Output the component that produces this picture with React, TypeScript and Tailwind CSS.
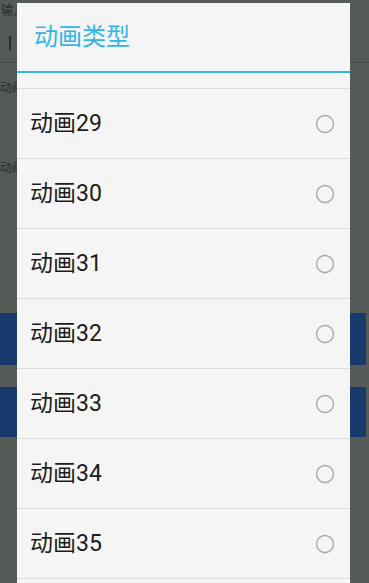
import React from "react";

const ITEMS = ["动画29", "动画30", "动画31", "动画32", "动画33", "动画34", "动画35"];

const FONT = { fontFamily: 'Roboto, "Noto Sans CJK SC", sans-serif' };

function Radio() {
  return (
    <svg width="20" height="20" viewBox="0 0 20 20" className="shrink-0">
      <circle cx="10" cy="10" r="8.5" fill="none" stroke="#a9a9a9" strokeWidth="1.4" />
    </svg>
  );
}

export default function App() {
  return (
    <div className="relative h-[583px] w-[369px] overflow-hidden bg-[#555958]" style={FONT}>
      {/* dimmed page behind the dialog */}
      <div className="flex flex-col">
        <div className="h-[24px] pl-[1px] pt-[3px] text-[12px] leading-[16px] text-[#2a2d2d]">输入</div>
        <div className="flex h-[39px] items-center border-b border-[#444847] pl-[9px]">
          <div className="h-[14px] w-[2px] bg-[#2a2d2d]" />
        </div>
        <div className="h-[96px] pt-[17px] text-[12px] leading-[16px] text-[#2a2d2d]">动画</div>
        <div className="h-[154px] pt-[1px] text-[12px] leading-[16px] text-[#2a2d2d]">动画</div>
        <div className="mr-[3px] h-[52px] bg-[#163a6c]" />
        <div className="h-[22px]" />
        <div className="mr-[3px] h-[50px] bg-[#163a6c]" />
      </div>

      {/* dialog */}
      <div className="absolute left-[17px] top-[3px] bottom-0 w-[333px] bg-[#f5f5f5]">
        <div className="flex h-[68px] items-center pl-[17px] pb-[1px] text-[24px] text-[#33b5e5]">动画类型</div>
        <div className="h-[2px] bg-[#33b5e5]" />
        <div className="h-[15px]" />
        <div className="border-b border-[#dddddd]">
          {ITEMS.map((t) => (
            <div key={t} className="flex h-[70px] items-center justify-between border-t border-[#dddddd] pl-[13px] pr-[15px]">
              <span className="text-[23px] leading-[28px] text-[#1c1c1c]">{t}</span>
              <Radio />
            </div>
          ))}
        </div>
      </div>
    </div>
  );
}
